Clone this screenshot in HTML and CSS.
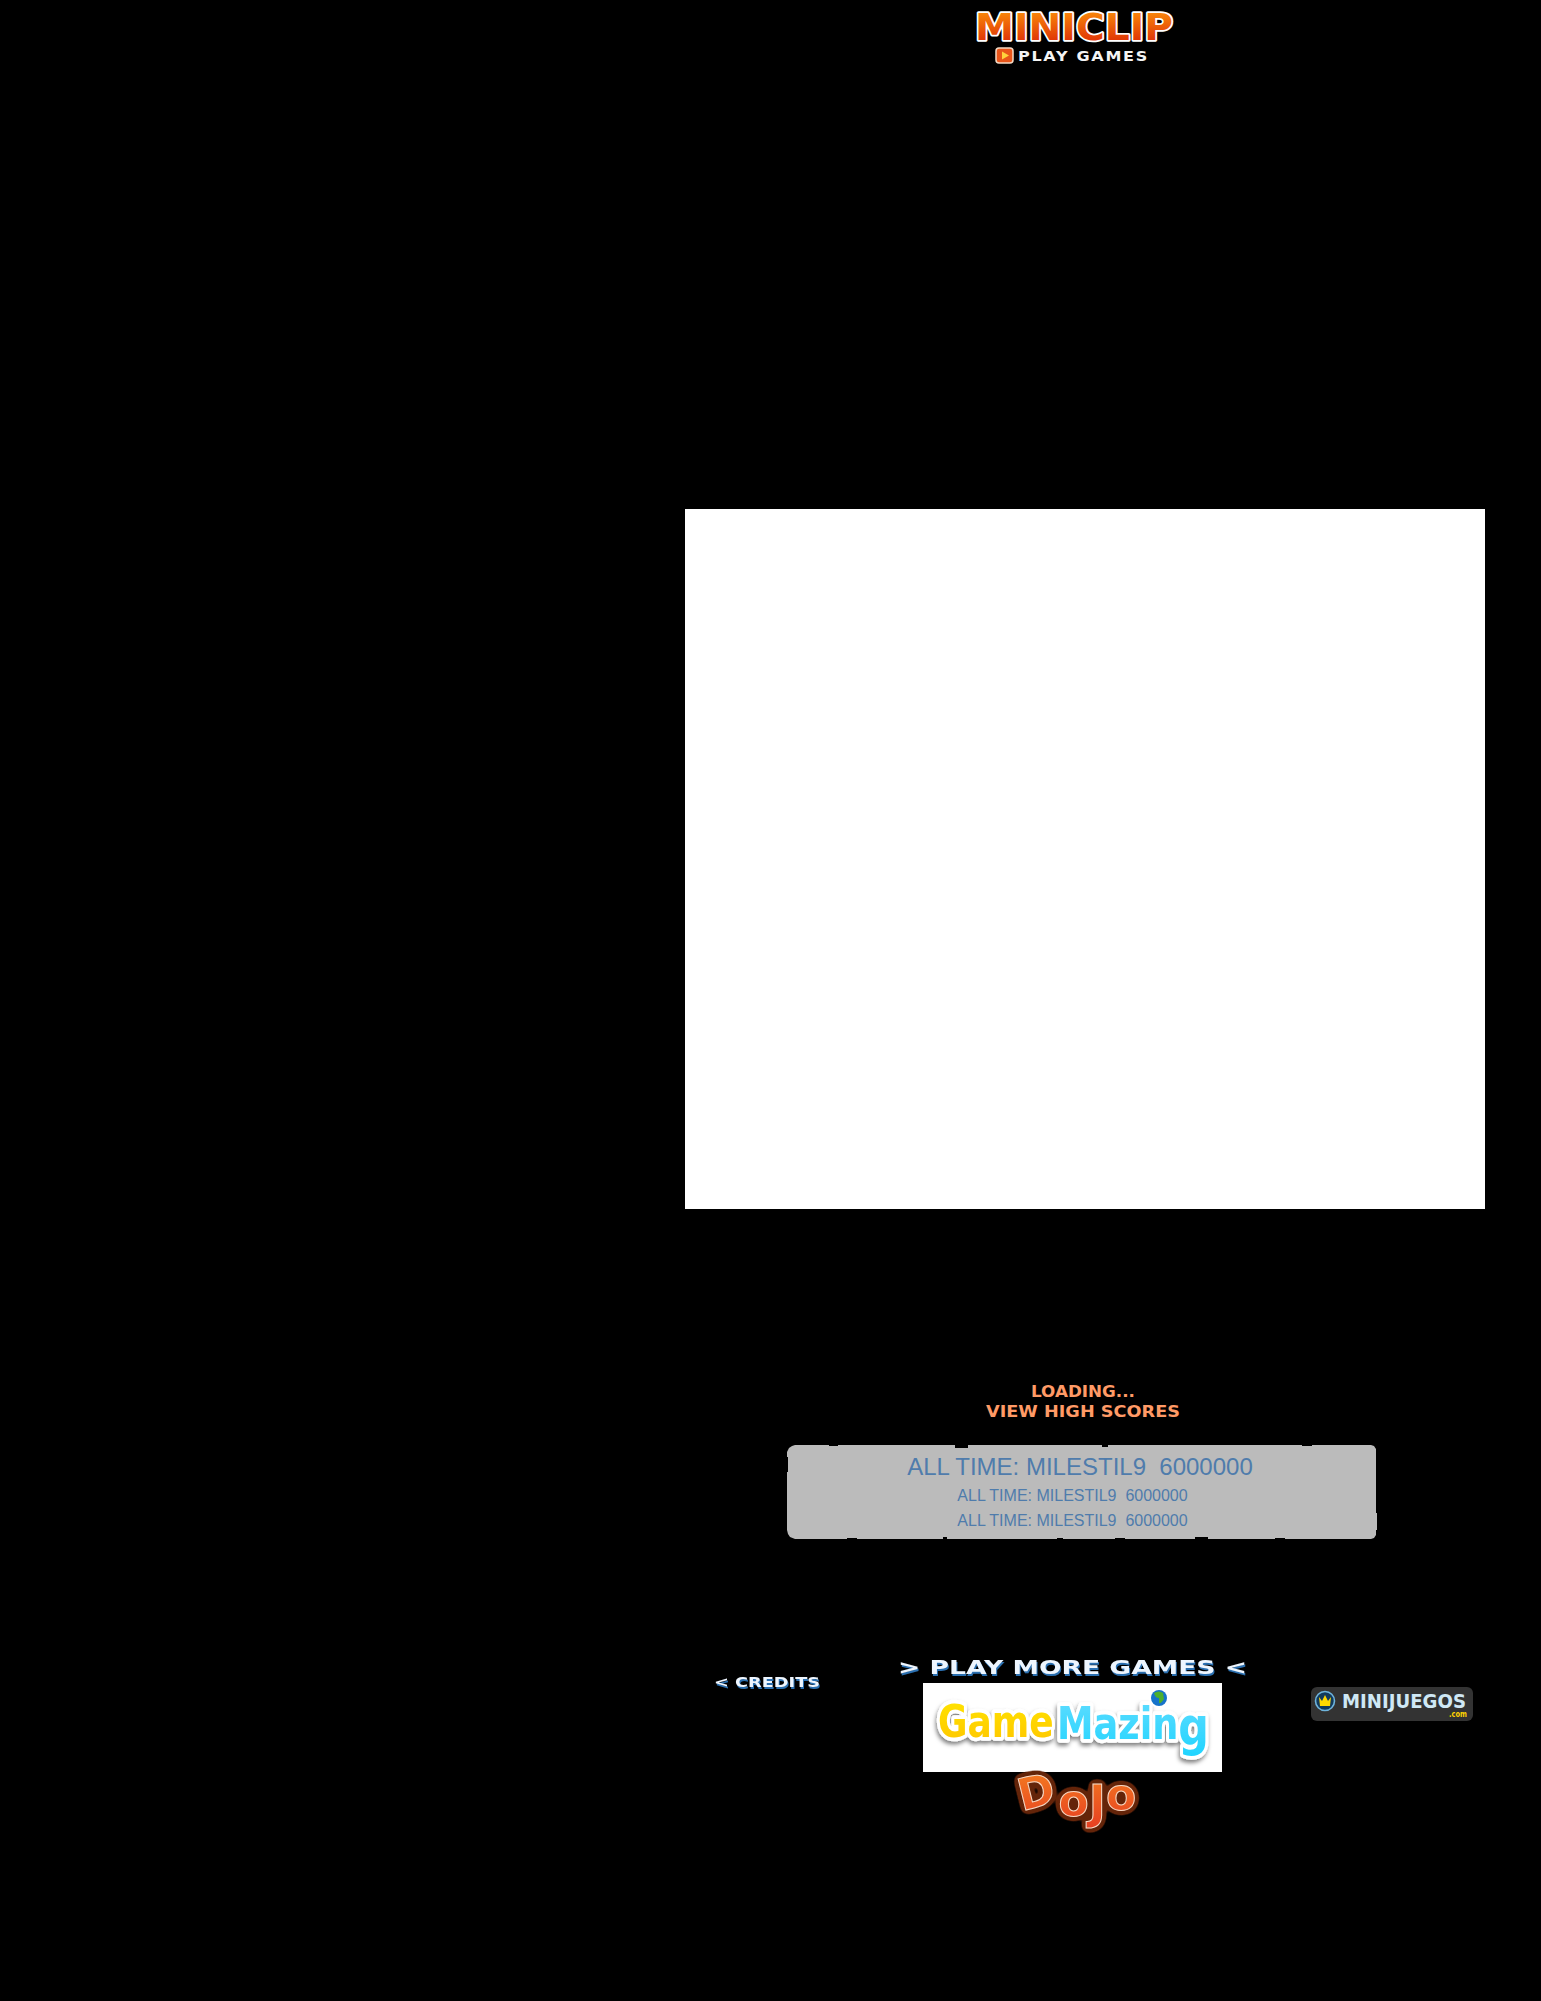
FILE: index.html
```html
<!DOCTYPE html>
<html lang="en">
<head>
<meta charset="utf-8">
<title>Miniclip game</title>
<link rel="stylesheet" href="styles.css">
</head>
<body>
<svg class="defs" width="0" height="0" aria-hidden="true">
  <defs>
    <linearGradient id="gMini" x1="0" y1="0" x2="0" y2="1"><stop offset="0" stop-color="#ff9a0a"/><stop offset="1" stop-color="#d81e06"/></linearGradient>
    <linearGradient id="gYellow" x1="0" y1="0" x2="0" y2="1"><stop offset="0" stop-color="#ffe600"/><stop offset="1" stop-color="#ffc400"/></linearGradient>
    <linearGradient id="gCyan" x1="0" y1="0" x2="0" y2="1"><stop offset="0" stop-color="#5fdcff"/><stop offset="1" stop-color="#1fd4ff"/></linearGradient>
    <linearGradient id="gDojo" x1="0" y1="0" x2="0" y2="1"><stop offset="0" stop-color="#f58220"/><stop offset="1" stop-color="#e63e22"/></linearGradient>
    <filter id="fShadow" x="-10%" y="-20%" width="125%" height="170%"><feDropShadow dx="-1" dy="3" stdDeviation="2" flood-color="#000" flood-opacity=".5"/></filter>
    <filter id="fDojo" x="-20%" y="-30%" width="140%" height="160%" color-interpolation-filters="sRGB">
      <feGaussianBlur in="SourceAlpha" stdDeviation="3" result="b"/>
      <feComponentTransfer in="b" result="d"><feFuncA type="linear" slope="14" intercept="-0.7"/></feComponentTransfer>
      <feFlood flood-color="#642409"/>
      <feComposite in2="d" operator="in" result="o"/>
      <feMerge><feMergeNode in="o"/><feMergeNode in="SourceGraphic"/></feMerge>
    </filter>
  </defs>
</svg>
<main class="page">
  <header class="top">
    <svg class="logo" width="206" height="66" viewBox="0 0 206 66">
      <text class="logo-word" x="3" y="38" textLength="198" lengthAdjust="spacingAndGlyphs">MINICLIP</text>
      <rect x="24" y="46" width="17" height="15" rx="3" fill="#e8551a" stroke="#f3d9c4" stroke-width="1.5"/>
      <path d="M30 49.5 L37 53.5 L30 57.5 Z" fill="#ffd23c"/>
      <text class="logo-sub" x="46" y="59" textLength="131" lengthAdjust="spacingAndGlyphs">PLAY GAMES</text>
    </svg>
  </header>

  <section class="game" aria-label="Game"></section>

  <section class="status">
    <svg class="line" width="110" height="18" viewBox="0 0 110 18"><text class="pixel-orange" x="3" y="14" textLength="104" lengthAdjust="spacingAndGlyphs">LOADING...</text></svg>
    <svg class="line" width="200" height="18" viewBox="0 0 200 18"><text class="pixel-orange" x="3" y="14" textLength="194" lengthAdjust="spacingAndGlyphs">VIEW HIGH SCORES</text></svg>
  </section>

  <section class="scores">
    <p class="score score-big">ALL TIME: MILESTIL9&nbsp; 6000000</p>
    <p class="score">ALL TIME: MILESTIL9&nbsp; 6000000</p>
    <p class="score">ALL TIME: MILESTIL9&nbsp; 6000000</p>
  </section>

  <footer class="foot">
    <svg class="credits" width="114" height="16" viewBox="0 0 114 16"><text class="pixel-blue" x="0" y="12" font-size="14" textLength="106" lengthAdjust="spacingAndGlyphs">&lt; CREDITS</text></svg>
    <div class="more">
      <svg class="line" width="354" height="24" viewBox="0 0 354 24"><text class="pixel-blue" x="2" y="15" font-size="19" textLength="349" lengthAdjust="spacingAndGlyphs">&gt; PLAY MORE GAMES &lt;</text></svg>
      <div class="gm">
        <svg width="299" height="89" viewBox="0 0 299 89">
          <g filter="url(#fShadow)">
            <text class="gm-word gm-game" transform="translate(15 54) scale(1 1.25)" x="0" y="0">Game</text>
            <text class="gm-word gm-mazing" transform="translate(134 56) scale(1.02 1.25)" x="0" y="0">Mazin<tspan class="gm-g" dy="5">g</tspan></text>
          </g>
          <circle cx="236" cy="15" r="10" fill="#fff"/>
          <circle cx="236" cy="15" r="8" fill="#1673c9"/>
          <path d="M231 10 Q236 7 240 10 L241 16 Q238 21 236 20 L236 15 Q232 15 231 10 Z" fill="#4caf2c"/>
        </svg>
      </div>
      <svg class="dojo" width="125" height="61" viewBox="0 0 125 61">
        <text class="dojo-word" x="9" y="39" rotate="-14 0 0 0" filter="url(#fDojo)">D<tspan dy="5">o</tspan><tspan class="dojo-j" dy="2">J</tspan><tspan dy="-8">o</tspan></text>
      </svg>
    </div>
    <div class="mj">
      <svg width="162" height="34" viewBox="0 0 162 34">
        <circle cx="14" cy="14" r="9.5" fill="#123a5c" stroke="#6fb4dc" stroke-width="1.6"/>
        <path d="M8 10 L11 14 L14 8 L17 14 L20 10 L19 19 L9 19 Z" fill="#ffd800"/>
        <text class="mj-name" x="31" y="21" textLength="124" lengthAdjust="spacingAndGlyphs">MINIJUEGOS</text>
        <text class="mj-com" x="138" y="30" textLength="18" lengthAdjust="spacingAndGlyphs">.com</text>
      </svg>
    </div>
  </footer>
</main>
</body>
</html>
```
FILE: styles.css
```css
* { box-sizing: border-box; }
html, body { margin: 0; background: #000; }
p { margin: 0; }
svg { overflow: visible; }
.defs { position: absolute; }

.page {
  width: 800px;
  margin-left: 685px;
  display: flex;
  flex-direction: column;
}

.top { height: 509px; padding: 2px 0 0 287px; }
.logo { display: block; }
.logo-word {
  font: 700 38px "DejaVu Sans", sans-serif;
  fill: url(#gMini);
  stroke: #fff;
  stroke-width: 3.5px;
  stroke-linejoin: round;
  paint-order: stroke;
}
.logo-sub {
  font: 700 14px "DejaVu Sans", sans-serif;
  letter-spacing: 1.5px;
  fill: #f4f4f4;
}

.game { height: 700px; background: #fff; }

.status {
  margin-top: 174px;
  display: flex;
  flex-direction: column;
  align-items: center;
  gap: 2px;
  padding-right: 4px;
}
.line { display: block; }
.pixel-orange {
  font: 700 15px "DejaVu Sans", sans-serif;
  fill: #ff9a66;
}

.scores {
  margin: 24px 0 0 102px;
  width: 590px;
  height: 94px;
  padding-top: 6px;
  background: #bbb;
  text-align: center;
  clip-path: polygon(
    8px 0, 10px 0, 42px 0, 42px 1px, 51px 1px, 51px 0, 168px 0, 168px 3px, 181px 3px, 181px 0,
    315px 0, 315px 2px, 321px 2px, 321px 0, 515px 0, 515px 1px, 525px 1px, 525px 0,
    584px 0, 587px 1px, 589px 4px, 589px 68px, 590px 68px, 590px 85px, 589px 85px, 589px 90px, 587px 93px, 584px 94px,
    498px 94px, 498px 93px, 488px 93px, 488px 94px, 421px 94px, 421px 92px, 408px 92px, 408px 94px,
    338px 94px, 338px 93px, 328px 93px, 328px 94px, 276px 94px, 276px 93px, 270px 93px, 270px 94px,
    160px 94px, 160px 92px, 156px 92px, 156px 94px, 70px 94px, 70px 93px, 60px 93px, 60px 94px,
    8px 94px, 3px 92px, 1px 89px, 0 85px, 0 27px, 1px 27px, 1px 12px, 0 12px, 0 7px, 2px 3px, 5px 1px
  );
}
.score {
  font: 16px/25px "Liberation Sans", Arial, sans-serif;
  color: #4f7cac;
  padding-right: 19px;
  white-space: nowrap;
}
.score-big {
  font-size: 24px;
  line-height: 32px;
  padding-right: 4px;
}

.foot {
  margin-top: 120px;
  display: grid;
  grid-template-columns: 214px 347px 239px;
  width: 800px;
  align-items: start;
}
.pixel-blue {
  font-weight: 700;
  font-family: "DejaVu Sans", sans-serif;
  fill: #eef6ff;
  filter: drop-shadow(1px 2px 0 #2a6fb0);
}
.credits { display: block; margin: 16px 0 0 29px; }
.more { display: flex; flex-direction: column; align-items: center; }
.gm { background: #fff; width: 299px; height: 89px; flex: none; }
.gm svg { display: block; }
.gm-word {
  font: 700 36px "DejaVu Sans", sans-serif;
  stroke: #fff;
  stroke-width: 6px;
  stroke-linejoin: round;
  paint-order: stroke;
}
.gm-game { fill: url(#gYellow); }
.gm-mazing { fill: url(#gCyan); }
.gm-g { font-size: 42px; }
.dojo { display: block; margin-left: 6px; }
.dojo-word {
  font: 700 44px "DejaVu Sans", sans-serif;
  fill: url(#gDojo);
  stroke: #f7d9c5;
  stroke-width: 1px;
}
.dojo-j { font-size: 46px; }
.mj {
  margin: 28px 0 0 65px;
  width: 162px;
  height: 34px;
  border-radius: 6px;
  background: #333;
}
.mj svg { display: block; }
.mj-name {
  font: 700 19px "DejaVu Sans", sans-serif;
  fill: #cfe8f5;
}
.mj-com {
  font: 700 8px "DejaVu Sans", sans-serif;
  fill: #ffd400;
}
```
